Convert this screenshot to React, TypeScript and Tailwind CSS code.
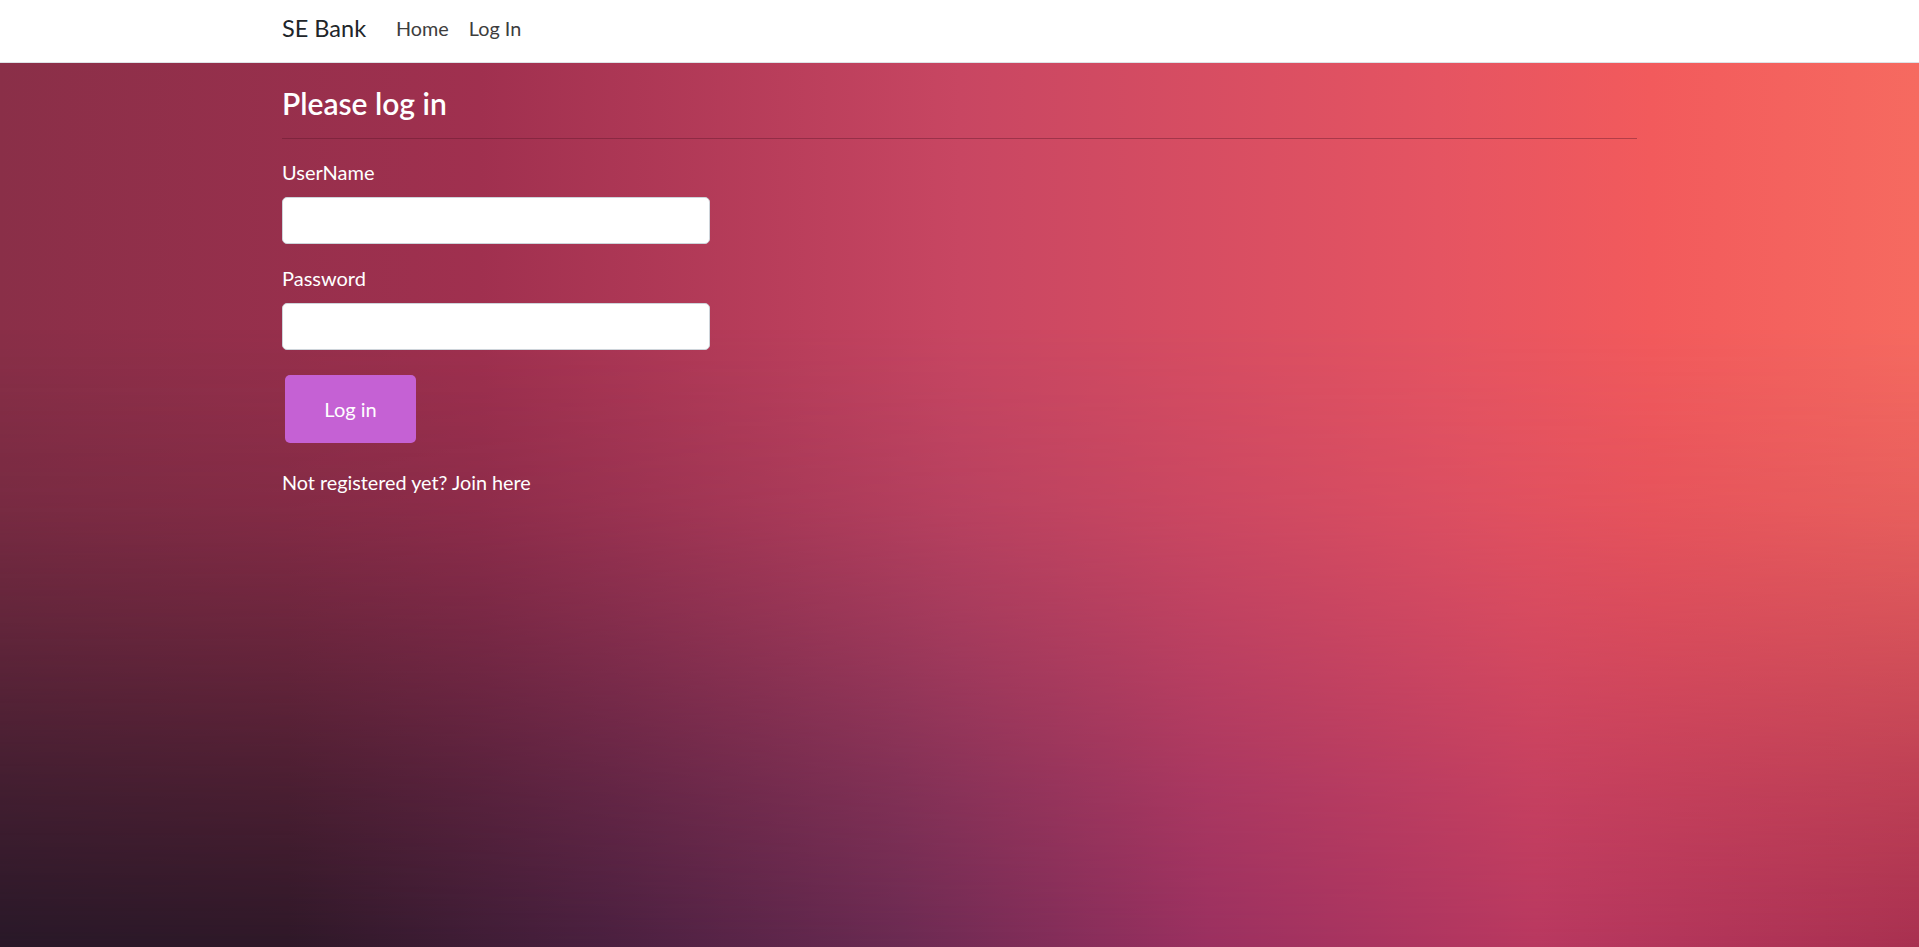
import React from 'react';

const App: React.FC = () => {
  return (
    <div className="min-h-screen flex flex-col font-['Segoe_UI','Lato','Open_Sans',sans-serif]">
      {/* Navbar */}
      <nav className="h-[63px] bg-white border-b border-[#dee2e6] shadow-[0_1px_3px_rgba(0,0,0,0.08)] shrink-0">
        <div className="w-[1355px] mx-auto h-full flex items-center pb-[5px]">
          <a className="text-[23.5px] text-[#212529] mr-[30px] leading-none">SE Bank</a>
          <div className="flex items-center gap-[20px] text-[19.8px] text-[#3d3d3d] leading-none">
            <a>Home</a>
            <a>Log In</a>
          </div>
        </div>
      </nav>

      {/* Main */}
      <main className="flex-1 relative bg-[linear-gradient(to_right,#8a2f48_0%,#a0304f_25%,#c84662_50%,#e55462_75%,#f25a5c_86%,#f66a60_100%)]">
        {/* lower, darker half of the backdrop */}
        <div className="absolute inset-0 pointer-events-none bg-[linear-gradient(to_right,#281828_0%,#2e1828_15%,#4a2040_32%,#6a2a52_47%,#9a3060_63%,#b83860_80%,#a83050_100%)] [mask-image:linear-gradient(to_top,black_0%,rgba(0,0,0,0.75)_17%,rgba(0,0,0,0.45)_34%,rgba(0,0,0,0.18)_50%,transparent_70%)]" />
        <div className="relative w-[1355px] mx-auto text-white pt-[22px]">
          <h1 className="text-[30px] font-semibold leading-[1.2] pb-[17px] border-b border-[rgba(90,20,40,0.4)]">
            Please log in
          </h1>

          <form className="mt-[18px] w-[428px]">
            <label className="block text-[20px] leading-[1.5]">UserName</label>
            <input
              type="text"
              className="mt-[10px] block w-full h-[47px] bg-white rounded-[5px] border border-[#ced4da] px-[15px] text-[20px] text-[#212529] outline-none"
            />
            <label className="block text-[20px] leading-[1.5] mt-[19px]">Password</label>
            <input
              type="password"
              className="mt-[10px] block w-full h-[47px] bg-white rounded-[5px] border border-[#ced4da] px-[15px] text-[20px] text-[#212529] outline-none"
            />
            <button
              type="button"
              className="mt-[25px] ml-[3px] w-[131px] h-[68px] bg-[#c561d4] rounded-[5px] text-white text-[20px]"
            >
              Log in
            </button>
            <p className="mt-[25px] text-[19.8px] leading-[1.5]">
              Not registered yet? <a>Join here</a>
            </p>
          </form>
        </div>
      </main>
    </div>
  );
};

export default App;
